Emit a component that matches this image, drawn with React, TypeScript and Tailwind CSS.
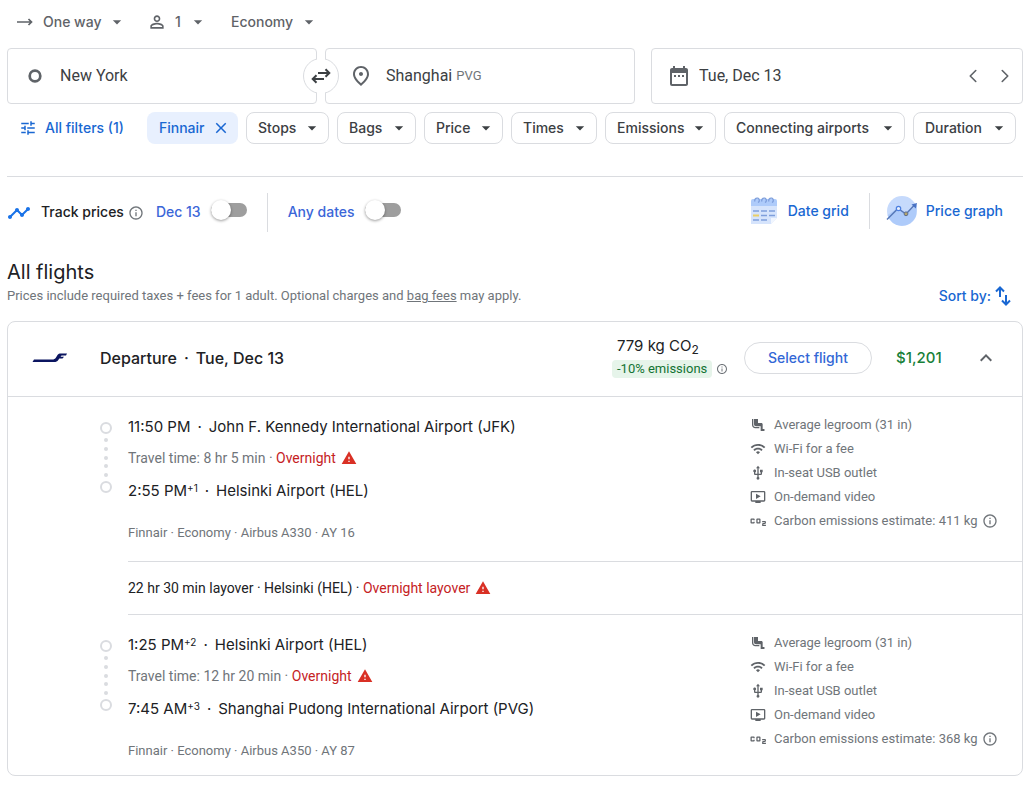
import {
  MdAirlineSeatLegroomNormal,
  MdArrowDropDown,
  MdClose,
  MdCo2,
  MdDateRange,
  MdExpandLess,
  MdInfoOutline,
  MdOndemandVideo,
  MdOutlinePlace,
  MdPersonOutline,
  MdTimeline,
  MdTune,
  MdUsb,
  MdWarning,
  MdWifi,
} from "react-icons/md";
import { LuChevronLeft, LuChevronRight } from "react-icons/lu";
import type { ReactNode } from "react";

function TripSelect({ label, options, width, icon }: { label: string; options: string[]; width: string; icon?: ReactNode }) {
  return (
    <label className="flex items-center">
      {icon}
      <span className={`relative flex items-center ${width}`}>
        <select
          aria-label={label}
          className="w-full appearance-none bg-transparent text-sm font-medium leading-5 text-[#5f6368] outline-none"
        >
          {options.map((o) => (
            <option key={o}>{o}</option>
          ))}
        </select>
        <MdArrowDropDown className="pointer-events-none absolute right-0 size-5 text-[#5f6368]" />
      </span>
    </label>
  );
}

const filters = [
  { name: "Stops", width: "w-[83px]" },
  { name: "Bags", width: "w-[79px]" },
  { name: "Price", width: "w-[79px]" },
  { name: "Times", width: "w-[86px]" },
  { name: "Emissions", width: "w-[111px]" },
  { name: "Connecting airports", width: "w-[181px]" },
  { name: "Duration", width: "w-[103px]" },
];

function FilterBar() {
  return (
    <div className="mt-2 flex items-center gap-2">
      <button className="mr-[15px] flex h-8 items-center gap-2 pl-3 text-sm font-medium text-[#1967d2]">
        <MdTune className="size-[18px]" />
        <span className="whitespace-nowrap">All filters (1)</span>
      </button>
      <button className="flex h-8 w-[91px] items-center justify-between rounded-lg bg-[#e8f0fe] pl-3 pr-2 text-sm font-medium text-[#1967d2]">
        Finnair
        <MdClose className="size-[18px]" />
      </button>
      {filters.map((f) => (
        <button
          key={f.name}
          aria-haspopup="dialog"
          className={`flex h-8 items-center justify-between whitespace-nowrap rounded-lg border border-[#dadce0] pl-[11px] pr-[6px] text-sm font-medium text-[#3c4043] ${f.width}`}
        >
          {f.name}
          <MdArrowDropDown className="size-5 shrink-0" />
        </button>
      ))}
    </div>
  );
}

function SearchBoxes() {
  return (
    <div className="grid grid-cols-[minmax(0,628fr)_minmax(0,372fr)] gap-4">
      <div className="relative grid grid-cols-2 gap-2">
        <label className="flex h-14 min-w-0 items-center rounded border border-[#dadce0] pl-5">
          <svg viewBox="0 0 14 14" className="size-[14px] shrink-0">
            <circle cx="7" cy="7" r="5.3" fill="none" stroke="#5f6368" strokeWidth="2.7" />
          </svg>
          <input aria-label="Where from?" defaultValue="New York" className="ml-[18px] w-48 min-w-0 text-base text-[#3c4043] outline-none" />
        </label>
        <label className="flex h-14 min-w-0 items-center rounded border border-[#dadce0] pl-[23px]">
          <MdOutlinePlace className="size-6 shrink-0 text-[#5f6368]" />
          <input
            aria-label="Where to?"
            defaultValue="Shanghai"
            className="ml-[13px] field-sizing-content text-base text-[#3c4043] outline-none"
          />
          <span className="ml-1 text-[13px] text-[#70757a]">PVG</span>
        </label>
        <button
          aria-label="Swap origin and destination"
          className="absolute left-1/2 top-1/2 flex size-9 -translate-x-1/2 -translate-y-1/2 items-center justify-center rounded-full border border-[#dadce0] bg-white before:absolute before:-inset-y-px before:w-2 before:bg-white"
        >
          <svg viewBox="0 0 20 18" className="relative h-[18px] w-5" fill="none" stroke="#3c4043" strokeWidth="2">
            <path d="M7 6H18M14.500 2.200L18.300 6L14.500 9.800M13 12H2M5.500 8.200L1.700 12L5.500 15.800" />
          </svg>
        </button>
      </div>
      <div className="flex h-14 items-center rounded border border-[#dadce0] pl-[15px] pr-px text-[#5f6368]">
        <MdDateRange className="size-6 shrink-0" />
        <input aria-label="Departure date" defaultValue="Tue, Dec 13" className="ml-2 min-w-0 flex-1 text-base text-[#3c4043] outline-none" />
        <button aria-label="Previous day" className="flex w-8 justify-center">
          <LuChevronLeft className="size-[22px]" strokeWidth={1.75} />
        </button>
        <button aria-label="Next day" className="flex w-8 justify-center">
          <LuChevronRight className="size-[22px]" strokeWidth={1.75} />
        </button>
      </div>
    </div>
  );
}

function Toggle({ label }: { label: string }) {
  return (
    <label className="flex items-center gap-[10px] text-sm font-medium text-[#3b66d8]">
      {label}
      <input
        type="checkbox"
        role="switch"
        className="relative mb-1 h-[14px] w-9 appearance-none rounded-full bg-[#9e9e9e] before:absolute before:left-0 before:-top-[3px] before:size-5 before:rounded-full before:bg-white before:shadow-[0_1px_3px_rgba(0,0,0,0.4)]"
      />
    </label>
  );
}

function DateGridIcon() {
  return (
    <svg viewBox="0 0 28 28" className="size-7">
      <path d="M1 9H27V21L21 27H1Z" fill="#d6e4fc" />
      <path d="M1 4a2 2 0 0 1 2-2H25a2 2 0 0 1 2 2V9H1Z" fill="#aecbfa" />
      <path d="M21 27V21H27Z" fill="#f1f6fe" />
      <g fill="none" stroke="#7f9fdc" strokeWidth="1.300">
        <path d="M5 4.500A2.300 2.300 0 1 1 8 5.500" />
        <path d="M12 4.500A2.300 2.300 0 1 1 15 5.500" />
        <path d="M19 4.500A2.300 2.300 0 1 1 22 5.500" />
      </g>
      <path d="M3 14H9M11 14H17M19 14H25M11 18.500H17M19 18.500H25M3 23H9M11 23H17" stroke="#7f9fdc" strokeWidth="1.500" />
      <path d="M3 18.500H9" stroke="#e9cf68" strokeWidth="2" />
    </svg>
  );
}

function PriceGraphIcon() {
  return (
    <svg viewBox="0 0 32 32" className="size-8">
      <circle cx="16" cy="16" r="15" fill="#c6dafc" />
      <path d="M1.500 20A15 15 0 0 0 30 21L31 10L20 19L12 13Z" fill="#aecbfa" />
      <path d="M1 24.500L12 13.500L20 19L28.500 10" fill="none" stroke="#5778b8" strokeWidth="1.500" />
      <path d="M31 8L29.800 13.500L25.500 9.400Z" fill="#4a73c4" />
      <circle cx="12.500" cy="13.500" r="2.200" fill="#e8f0fe" stroke="#4c7fe0" strokeWidth="1.200" />
      <circle cx="20" cy="18.800" r="1.900" fill="#b3a46a" stroke="#5f6f8f" strokeWidth="1" />
    </svg>
  );
}

function FinnairLogo() {
  return (
    <svg viewBox="0 0 36 12" className="h-3 w-9" fill="#0b1560">
      <path d="M2 7.500H20C22 7.500 23 7 24 5.500L25.500 3C26.500 1.700 27.300 1.500 29 1.500H35L34 3.500H29.500L28.500 4.700H32L30.500 6.500H27.300L26.300 8C25.300 9.600 24.200 10 22 10H.5Z" />
    </svg>
  );
}

function Timeline() {
  return (
    <svg viewBox="0 0 12 72" className="mt-[7px] h-[72px] w-3" fill="none">
      <circle cx="6" cy="6" r="5" stroke="#dadce0" strokeWidth="2" />
      <circle cx="6" cy="65" r="5" stroke="#dadce0" strokeWidth="2" />
      {[18, 27, 36, 44, 53].map((y) => (
        <circle key={y} cx="6" cy={y} r="2" fill="#dadce0" />
      ))}
    </svg>
  );
}

interface Stop {
  time: string;
  plus?: string;
  place: string;
}

function StopLine({ time, plus, place }: Stop) {
  return (
    <p className="flex h-6 items-center font-['Inter',sans-serif] text-[15px] leading-6 text-[#202124]">
      <span>{time}</span>
      {plus && <span className="self-start text-[10px] leading-[18px]">{plus}</span>}
      <span className="mx-[7px]">·</span>
      <span>{place}</span>
    </p>
  );
}

function Leg({ from, to, travel, plane, carbon, last }: { from: Stop; to: Stop; travel: string; plane: string; carbon: string; last?: boolean }) {
  const amenities = [
    { icon: <MdAirlineSeatLegroomNormal className="size-4" />, text: "Average legroom (31 in)" },
    { icon: <MdWifi className="size-4" />, text: "Wi-Fi for a fee" },
    { icon: <MdUsb className="size-4" />, text: "In-seat USB outlet" },
    { icon: <MdOndemandVideo className="size-4" />, text: "On-demand video" },
    { icon: <MdCo2 className="size-5 shrink-0" />, text: `Carbon emissions estimate: ${carbon}`, info: true },
  ];
  return (
    <section className={`flex pl-[92px] pt-[18px] ${last ? "pb-4" : "pb-5"}`}>
      <Timeline />
      <div className="ml-4 flex-1">
        <StopLine {...from} />
        <p className="mt-[9px] flex items-center text-sm leading-5 text-[#70757a]">
          <span className="whitespace-pre">Travel time: {travel} · </span>
          <span className="text-[#c5221f]">Overnight</span>
          <MdWarning className="ml-[5px] size-4 text-[#d93025]" />
        </p>
        <div className="mt-[11px]">
          <StopLine {...to} />
        </div>
        <p className="mt-[22px] text-[13px] leading-4 text-[#70757a]">Finnair · Economy · {plane}</p>
      </div>
      <ul className="-mt-0.5 w-[272px] text-[13px] leading-6 text-[#70757a]">
        {amenities.map((a) => (
          <li key={a.text} className="flex items-center whitespace-nowrap">
            <span className="flex w-4 shrink-0 justify-center text-[#5f6368]">{a.icon}</span>
            <span className="ml-2">{a.text}</span>
            {a.info && (
              <button aria-label="About carbon emissions" className="ml-1">
                <MdInfoOutline className="size-4" />
              </button>
            )}
          </li>
        ))}
      </ul>
    </section>
  );
}

export default function App() {
  return (
    <main className="min-h-screen bg-white pb-[10px] pl-[7px] pr-[6px] font-['Roboto',sans-serif] text-[#202124]">
      <div className="flex h-12 items-center pb-[5px] pl-[10px] font-['Inter',sans-serif]">
        <TripSelect
          label="Trip type"
          options={["One way", "Round trip", "Multi-city"]}
          width="w-[84px]"
          icon={
            <svg viewBox="0 0 16 10" className="mr-[10px] h-[10px] w-4" fill="none" stroke="#5f6368" strokeWidth="1.700">
              <path d="M0 5H14M11.500 2L14.500 5L11.500 8" />
            </svg>
          }
        />
        <div className="ml-5">
          <TripSelect label="Passengers" options={["1", "2", "3"]} width="w-[33px]" icon={<MdPersonOutline className="mr-2 size-5 text-[#5f6368]" />} />
        </div>
        <div className="ml-[23px]">
          <TripSelect label="Cabin" options={["Economy", "Premium economy", "Business", "First"]} width="w-[88px]" />
        </div>
      </div>

      <SearchBoxes />
      <div className="font-['Inter',sans-serif]">
        <FilterBar />

        <div className="mt-8 flex items-start border-t border-[#dadce0] pt-4 text-sm font-medium">
          <MdTimeline className="mt-2 size-6 text-[#1a73e8]" />
          <span className="ml-[10px] mt-[9px] leading-5">Track prices</span>
          <button aria-label="About price tracking" className="ml-1 mt-3 text-[#70757a]">
            <MdInfoOutline className="size-4" />
          </button>
          <div className="ml-3 mt-[9px]">
            <Toggle label="Dec 13" />
          </div>
          <div className="ml-5 h-[39px] w-px bg-[#dadce0]" />
          <div className="ml-5 mt-[9px]">
            <Toggle label="Any dates" />
          </div>
          <div className="ml-auto flex h-9 items-center pr-5 text-[#1967d2]">
            <button className="flex items-center gap-[10px]">
              <DateGridIcon />
              Date grid
            </button>
            <div className="ml-5 mr-4 h-9 w-px bg-[#dadce0]" />
            <button className="flex items-center gap-2">
              <PriceGraphIcon />
              Price graph
            </button>
          </div>
        </div>

        <h1 className="mt-[26px] text-xl leading-7">All flights</h1>
      </div>
      <div className="flex h-5 items-center justify-between">
        <p className="text-[13px] leading-5 text-[#70757a]">
          Prices include required taxes + fees for 1 adult. Optional charges and{" "}
          <a href="#bag-fees" className="underline">
            bag fees
          </a>{" "}
          may apply.
        </p>
        <button className="flex items-center gap-1 pr-3 font-['Inter',sans-serif] text-sm font-medium text-[#1967d2]">
          Sort by:
          <svg viewBox="0 0 16 20" className="h-5 w-4" fill="none" stroke="currentColor" strokeWidth="2">
            <path d="M5 11V2M1 5.500L5 1.500L9 5.500M11 9V18M7 14.500L11 18.500L15 14.500" />
          </svg>
        </button>
      </div>

      <article className="mt-[15px] rounded-lg border border-[#dadce0]">
        <header className="flex h-[75px] items-center border-b border-[#dadce0] pb-0.5 pl-6 font-['Inter',sans-serif]">
          <FinnairLogo />
          <h2 className="ml-8 flex flex-1 gap-[7px] text-base font-medium leading-6">
            <span>Departure</span>
            <span>·</span>
            <span>Tue, Dec 13</span>
          </h2>
          <div className="w-[132px] pb-[3px]">
            <p className="pl-[5px] text-[15px] leading-5">
              779 kg CO<sub className="text-xs">2</sub>
            </p>
            <div className="mt-1 flex items-center">
              <span className="rounded-sm bg-[#e6f4ea] px-[5px] font-['Roboto',sans-serif] text-[13px] leading-[18px] text-[#137333]">-10% emissions</span>
              <button aria-label="About emissions" className="ml-1 text-[#70757a]">
                <MdInfoOutline className="size-3" />
              </button>
            </div>
          </div>
          <button className="h-8 w-32 rounded-full border border-[#dadce0] text-sm font-medium text-[#3367d6]">Select flight</button>
          <span className="ml-6 w-[78px] text-[15px] font-medium text-[#188038]">$1,201</span>
          <button aria-label="Hide details" className="mr-6 text-[#5f6368]">
            <MdExpandLess className="size-6" />
          </button>
        </header>

        <Leg
          from={{ time: "11:50 PM", place: "John F. Kennedy International Airport (JFK)" }}
          to={{ time: "2:55 PM", plus: "+1", place: "Helsinki Airport (HEL)" }}
          travel="8 hr 5 min"
          plane="Airbus A330 · AY 16"
          carbon="411 kg"
        />
        <div className="ml-[120px] flex h-[54px] items-center border-y border-[#dadce0] text-sm">
          <span className="whitespace-pre">22 hr 30 min layover · Helsinki (HEL) · </span>
          <span className="text-[#c5221f]">Overnight layover</span>
          <MdWarning className="ml-[5px] size-4 text-[#d93025]" />
        </div>
        <Leg
          from={{ time: "1:25 PM", plus: "+2", place: "Helsinki Airport (HEL)" }}
          to={{ time: "7:45 AM", plus: "+3", place: "Shanghai Pudong International Airport (PVG)" }}
          travel="12 hr 20 min"
          plane="Airbus A350 · AY 87"
          carbon="368 kg"
          last
        />
      </article>
    </main>
  );
}
